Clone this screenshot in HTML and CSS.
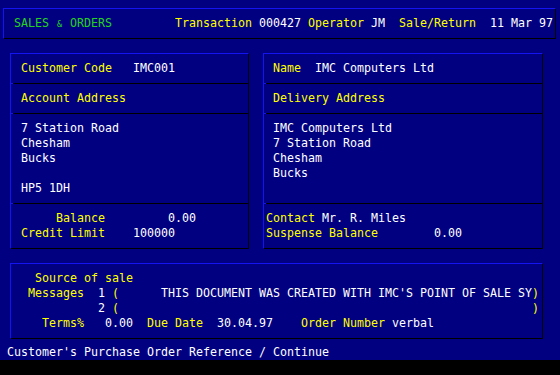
FILE: index.html
```html
<!DOCTYPE html>
<html>
<head>
<meta charset="utf-8">
<title>Sales &amp; Orders</title>
<link rel="stylesheet" href="styles.css">
</head>
<body>
<div class="screen">
  <div class="box header">
    <div class="ln"><span class="g">SALES <span class="amp">&amp;</span> ORDERS</span>         <span class="y">Transaction</span> 000427 <span class="y">Operator</span> JM  <span class="y">Sale/Return</span>  11 Mar 97</div>
  </div>

  <div class="panels">
    <div class="box panel left">
      <div class="sec"><div class="ln"><span class="y">Customer Code</span>   IMC001</div></div>
      <div class="sep"></div>
      <div class="sec"><div class="ln y">Account Address</div></div>
      <div class="sep"></div>
      <div class="sec">
        <div class="ln">7 Station Road</div>
        <div class="ln">Chesham</div>
        <div class="ln">Bucks</div>
        <div class="ln"> </div>
        <div class="ln">HP5 1DH</div>
      </div>
      <div class="sep"></div>
      <div class="sec">
        <div class="ln">     <span class="y">Balance</span>         0.00</div>
        <div class="ln"><span class="y">Credit Limit</span>    100000</div>
      </div>
    </div>

    <div class="box panel right">
      <div class="sec"><div class="ln"><span class="y">Name</span>  IMC Computers Ltd</div></div>
      <div class="sep"></div>
      <div class="sec"><div class="ln y">Delivery Address</div></div>
      <div class="sep"></div>
      <div class="sec">
        <div class="ln">IMC Computers Ltd</div>
        <div class="ln">7 Station Road</div>
        <div class="ln">Chesham</div>
        <div class="ln">Bucks</div>
        <div class="ln"> </div>
      </div>
      <div class="sep"></div>
      <div class="sec contact">
        <div class="ln"><span class="y">Contact</span> Mr. R. Miles</div>
        <div class="ln"><span class="y">Suspense Balance</span>        0.00</div>
      </div>
    </div>
  </div>

  <div class="box footer">
    <div class="ln y"> Source of sale</div>
    <div class="ln"><span class="y">Messages</span>  1 <span class="y">(</span>      THIS DOCUMENT WAS CREATED WITH IMC'S POINT OF SALE SY<span class="y">)</span></div>
    <div class="ln">          2 <span class="y">(</span>                                                           <span class="y">)</span></div>
    <div class="ln">  <span class="y">Terms%</span>   0.00  <span class="y">Due Date</span>  30.04.97    <span class="y">Order Number</span> verbal</div>
  </div>

  <div class="status ln">Customer's Purchase Order Reference / Continue</div>
</div>
</body>
</html>
```

FILE: styles.css
```css
html, body {
  margin: 0;
  padding: 0;
  background: #000000;
}

body {
  width: 560px;
  height: 375px;
  overflow: hidden;
  font-family: "DejaVu Sans Mono", "Liberation Mono", monospace;
  font-size: 11.63px;
  line-height: 15px;
  color: #ffffff;
}

.screen {
  box-sizing: border-box;
  height: 360px;
  background: #000080;
  padding-top: 8px;
  display: flex;
  flex-direction: column;
}

.ln {
  white-space: pre;
  height: 15px;
}

.y { color: #ffff00; }
.g { color: #22d422; }

.amp {
  display: inline-block;
  width: 7px;
  font-size: 8.5px;
  text-align: center;
}

.box {
  box-sizing: border-box;
  border-top: 1px solid #1414f0;
  border-left: 1px solid #1414f0;
  border-right: 1px solid #000000;
  border-bottom: 1px solid #000000;
}

.header {
  margin-left: 3px;
  width: 553px;
  padding: 7px 0 7px 10px;
}

.panels {
  display: flex;
  gap: 14px;
  margin-top: 14px;
  margin-left: 10px;
}

.panel {
  display: flex;
  flex-direction: column;
  height: 196px;
}

.left { width: 239px; }
.right { width: 280px; }

.sec {
  padding: 7px 0 7px 10px;
}

.right .sec {
  padding-left: 9px;
}

.right .sec.contact {
  padding-left: 2px;
}

.sep {
  height: 1px;
  background: linear-gradient(90deg, #1414f0 0 2px, #000000 2px);
}

.footer {
  margin-top: 14px;
  margin-left: 10px;
  width: 533px;
  padding: 7px 0 7px 17px;
}

.status {
  margin-top: 6px;
  padding-left: 7px;
}
```
